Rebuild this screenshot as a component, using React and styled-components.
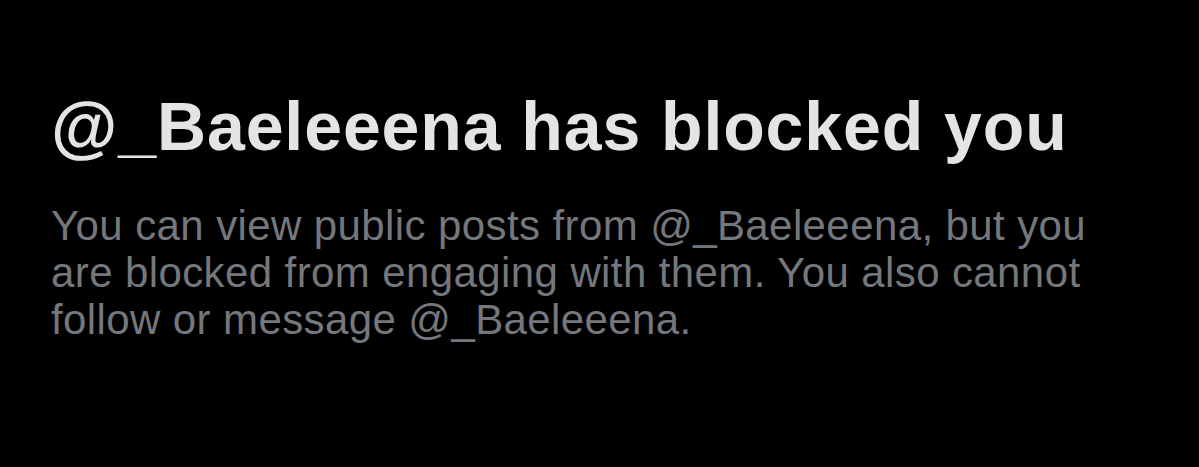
import React from 'react';
import styled, { createGlobalStyle } from 'styled-components';

const Global = createGlobalStyle`
  html, body {
    margin: 0;
    padding: 0;
    background: #000;
  }
  body {
    font-family: 'Liberation Sans', Arial, sans-serif;
  }
`;

const Page = styled.div`
  width: 1199px;
  height: 467px;
  background: #000;
  box-sizing: border-box;
  padding: 88px 0 0 51px;
  overflow: hidden;
`;

const Heading = styled.h1`
  margin: 0;
  font-family: 'Liberation Sans', Arial, sans-serif;
  font-weight: 700;
  font-size: 68px;
  line-height: 76px;
  color: #e3e4e5;
  letter-spacing: 0.9px;
  white-space: nowrap;
`;

const Body = styled.p`
  margin: 38px 0 0 0;
  width: 1080px;
  font-family: 'Liberation Sans', Arial, sans-serif;
  font-size: 42px;
  line-height: 47px;
  color: #74777b;
  letter-spacing: 0.4px;
`;

export default function App() {
  const handle = '@_Baeleeena';
  return (
    <Page>
      <Global />
      <Heading>{handle} has blocked you</Heading>
      <Body>
        You can view public posts from {handle}, but you are blocked from engaging with them. You also
        cannot follow or message {handle}.
      </Body>
    </Page>
  );
}
